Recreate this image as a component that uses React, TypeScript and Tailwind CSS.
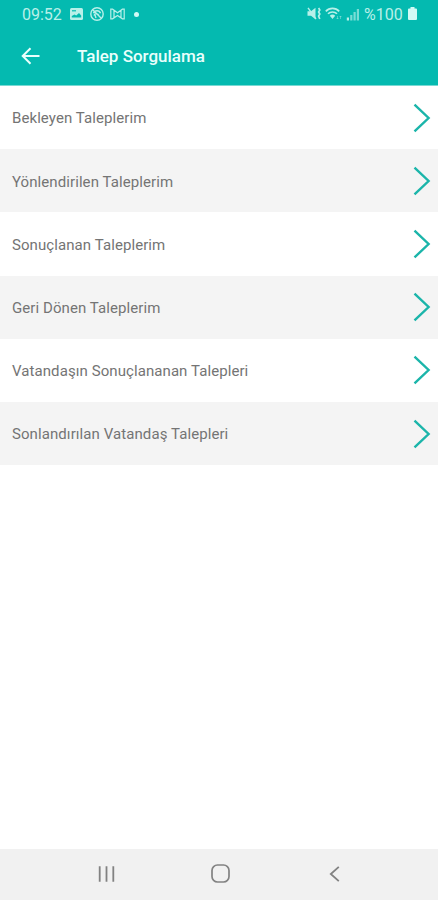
const menuItems = [
  "Bekleyen Taleplerim",
  "Yönlendirilen Taleplerim",
  "Sonuçlanan Taleplerim",
  "Geri Dönen Taleplerim",
  "Vatandaşın Sonuçlananan Talepleri",
  "Sonlandırılan Vatandaş Talepleri",
];

function StatusBar() {
  return (
    <div className="flex h-7 items-center justify-between pr-[21px] pl-[22px] text-[#b8f0e9]">
      <div className="flex items-center">
        <span className="w-[40px] pt-px text-[16px] whitespace-nowrap">09:52</span>
        <svg className="ml-2 h-[12px] w-[13px]" viewBox="0 0 13 12">
          <rect width="13" height="12" rx="1.5" fill="currentColor" />
          <path d="M1.8 9.5V8L4.5 6.5 6.2 7.5 9 5 11.2 7.5V9.5Z" fill="#04bab0" />
          <path d="M2 2.8H6" stroke="#04bab0" strokeWidth="1.2" />
        </svg>
        <svg className="ml-[7px] h-[14px] w-[14px]" viewBox="0 0 14 14" fill="none" stroke="currentColor">
          <circle cx="7" cy="7" r="6.2" strokeWidth="1.4" />
          <path d="M3.5 6.2C4.5 3 9.5 3 10.5 6.2M4 8.5C5 6 8 6 9 8.7M3 3l8 8M6 11 5 8" strokeWidth="1.4" />
        </svg>
        <svg className="ml-[6px] h-[12px] w-[15px]" viewBox="0 0 15 12" fill="none" stroke="currentColor">
          <path d="M.8 10.8V1.2H2.6L7.5 4.8 12.4 1.2H14.2V10.8H12.4L7.5 7.4 2.6 10.8ZM4 2.5V9.5M11 2.5V9.5" strokeWidth="1.2" />
        </svg>
        <span className="ml-[9px] size-[5px] rounded-full bg-[#d1faf5]" />
      </div>
      <div className="flex items-center">
        <svg className="mb-[2px] h-[13px] w-[14px]" viewBox="0 0 14 13" fill="none" stroke="currentColor">
          <path d="M.5 4.2H4L8.5.8V12.2L4 8.8H.5Z" fill="currentColor" stroke="none" />
          <path d="M1 .8 9 12" strokeWidth="1.4" />
          <path d="M11.6 1 12.8 3 11.6 5 12.8 7 11.6 9 12.8 12" strokeWidth="1.7" />
        </svg>
        <svg className="mb-[2px] ml-[4px] h-[13px] w-[18px]" viewBox="0 0 18 13" fill="none" stroke="currentColor">
          <path d="M.8 4.4C4.3.4 10.7.4 14.2 4.4M3 6.8C5.3 4.3 9.7 4.3 12 6.8" strokeWidth="1.6" />
          <path d="M4.8 8.8C6.3 7.2 8.7 7.2 10.2 8.8L7.5 12Z" fill="currentColor" stroke="none" />
          <path d="M12.5 9V12M11.5 11 12.5 12 13.5 11M15.5 12V9M14.5 10 15.5 9 16.5 10" strokeWidth=".6" opacity=".7" />
        </svg>
        <svg className="ml-[3px] h-[13px] w-[14px]" viewBox="0 0 14 13" fill="currentColor">
          <path d="M.8 9.5h2.2v3H.8Z" />
          <path d="M4.2 7h2.2v5.5H4.2ZM7.5 4h2.2v8.5H7.5ZM10.8 1h2.2v11.5h-2.2Z" opacity=".65" />
        </svg>
        <span className="ml-[4px] w-[40px] pt-px text-[16px] whitespace-nowrap">%100</span>
        <svg className="mb-px ml-[4px] h-[13px] w-[9px]" viewBox="0 0 9 13" fill="#d1faf5">
          <path d="M2.5 0h4v1.5H8a1 1 0 0 1 1 1V12a1 1 0 0 1-1 1H1a1 1 0 0 1-1-1V2.5a1 1 0 0 1 1-1h1.5Z" />
        </svg>
      </div>
    </div>
  );
}

function NavigationBar() {
  return (
    <nav className="flex h-[51px] items-center justify-between bg-[#f1f1f1] pr-[97px] pb-px pl-[97px] text-[#828282]">
      <svg className="h-[18px] w-[18px]" viewBox="0 0 18 18" fill="none" stroke="currentColor" strokeWidth="1.8">
        <path d="M2.7 1.2V16.8M9.5 1.2V16.8M16.3 1.2V16.8" />
      </svg>
      <svg className="mr-[4px] mb-px h-[19px] w-[19px]" viewBox="0 0 19 19" fill="none" stroke="currentColor" strokeWidth="1.7">
        <rect x="1" y="1" width="17" height="17" rx="5.5" />
      </svg>
      <svg className="h-[18px] w-[12px]" viewBox="0 0 12 18" fill="none" stroke="currentColor" strokeWidth="1.8">
        <path d="M9.8 1.8 1.8 9 9.8 16.2" />
      </svg>
    </nav>
  );
}

export default function App() {
  return (
    <div className="flex h-[900px] w-[438px] flex-col overflow-hidden bg-white font-[Roboto,sans-serif]">
      <header className="h-[86px] border-b border-[#79d9d3] bg-[#04bab0]">
        <StatusBar />
        <div className="flex h-[56px] items-center pl-[21px]">
          <svg className="h-[18px] w-[19px]" viewBox="0 0 19 18" fill="none" stroke="#e9fffc" strokeWidth="2">
            <path d="M18.5 9H2M9.5 1.2 1.7 9 9.5 16.8" />
          </svg>
          <h1 className="ml-[37px] pt-px text-[17px] font-medium whitespace-nowrap text-[#e9fffc]">Talep Sorgulama</h1>
        </div>
      </header>
      <main className="flex-1">
        {menuItems.map((item) => (
          <div
            key={item}
            className="flex h-[63.2px] items-center justify-between pr-[7px] pl-[12px] even:bg-[#f4f4f4]"
          >
            <span className="pt-[2px] text-[15px] tracking-[0.08px] whitespace-nowrap text-[#747474]">{item}</span>
            <svg className="h-[30px] w-[18px]" viewBox="0 0 18 30" fill="none" stroke="#1bb5aa" strokeWidth="2.4">
              <path d="M1.5 1.6 15.6 15 1.5 28.4" />
            </svg>
          </div>
        ))}
      </main>
      <NavigationBar />
    </div>
  );
}
